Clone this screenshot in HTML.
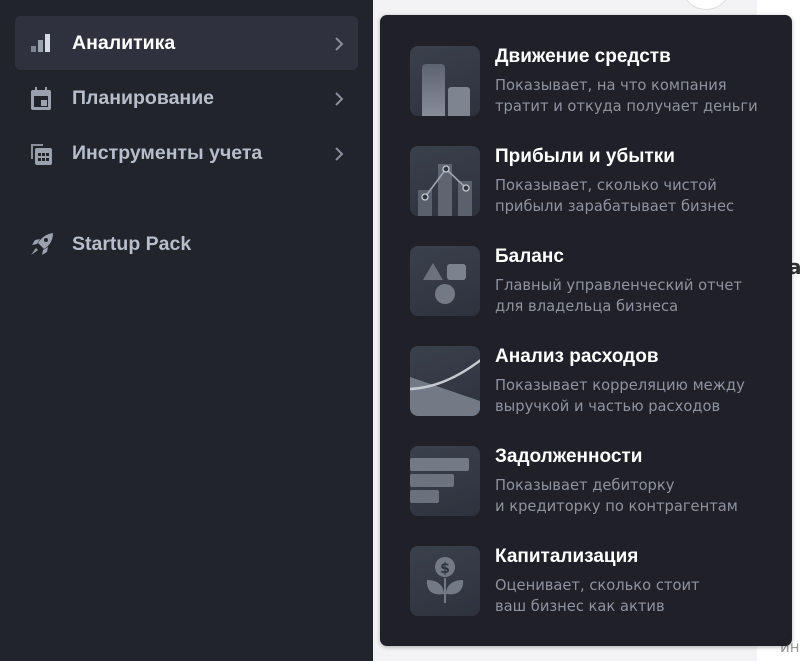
<!DOCTYPE html>
<html><head><meta charset="utf-8"><style>
*{margin:0;padding:0;box-sizing:border-box}
body{width:800px;height:661px;overflow:hidden;background:#f3f3f5;font-family:"DejaVu Sans","Liberation Sans",sans-serif;position:relative}
.side{position:absolute;left:0;top:0;width:373px;height:661px;background:#22242c}
.row{position:absolute;left:15px;width:343px;height:54px;border-radius:6px}
.row.act{background:#2f313e}
.row .t{position:absolute;left:57px;top:16px;font-family:"Liberation Sans",sans-serif;font-size:19.5px;font-weight:bold;color:#b7bdca}
.row.act .t{color:#fff}
.row svg.ic{position:absolute;left:14px;top:15px}
.chev{position:absolute;left:318px;top:20px}
.pop{position:absolute;left:380px;top:15px;width:412px;height:631px;background:#1f2028;border-radius:7px;box-shadow:0 1px 4px rgba(0,0,0,.3)}
.it{position:absolute;left:30px;width:380px;height:70px}
.box{position:absolute;left:0;top:0;width:70px;height:70px;border-radius:8px;background:linear-gradient(160deg,#3b404d,#2e323d);overflow:hidden}
.it h3{position:absolute;left:85px;top:0px;font-family:"Liberation Sans",sans-serif;font-size:19px;font-weight:bold;color:#fff;white-space:nowrap}
.it p{position:absolute;left:85px;top:29px;font-size:14.7px;line-height:21px;color:#8e939f;white-space:nowrap}
.rt{position:absolute;left:757px;top:0;width:43px;height:661px;background:#fff}
</style></head><body>
<div class="rt"></div>
<div style="position:absolute;left:683px;top:-30px;width:46px;height:40px;border-radius:50%;border:1px solid #ddd;background:#fff"></div>
<div style="position:absolute;left:788px;top:255px;font-size:20px;font-weight:bold;color:#333">а</div>
<div style="position:absolute;left:780px;top:638px;font-size:15px;color:#999">ин</div>
<div class="side">
 <div class="row act" style="top:16px">
  <svg class="ic" width="24" height="24" viewBox="0 0 24 24"><rect x="2" y="15" width="5" height="6" fill="#7f8593"/><rect x="9" y="9" width="5" height="12" fill="#9aa1ae"/><rect x="16" y="3" width="5" height="18" fill="#d5dbe5"/></svg>
  <div class="t">Аналитика</div>
  <svg class="chev" width="12" height="16" viewBox="0 0 12 16"><path d="M3 2l6 6-6 6" stroke="#8a8f9b" stroke-width="2" fill="none"/></svg>
 </div>
 <div class="row" style="top:71px">
  <svg class="ic" width="24" height="26" viewBox="0 0 24 26"><rect x="2" y="4" width="20" height="20" rx="2" fill="#9ba1ad"/><rect x="5" y="10" width="14" height="11" fill="#22242c"/><rect x="12" y="14" width="6" height="6" fill="#9ba1ad"/><rect x="6" y="1" width="2" height="4" fill="#9ba1ad"/><rect x="16" y="1" width="2" height="4" fill="#9ba1ad"/></svg>
  <div class="t">Планирование</div>
  <svg class="chev" width="12" height="16" viewBox="0 0 12 16"><path d="M3 2l6 6-6 6" stroke="#8a8f9b" stroke-width="2" fill="none"/></svg>
 </div>
 <div class="row" style="top:126px">
  <svg class="ic" width="24" height="26" viewBox="0 0 24 26"><path d="M2 3h12v2H4v13H2z" fill="#8a909c"/><rect x="6" y="7" width="17" height="17" rx="2" fill="#9ba1ad"/><g fill="#22242c"><rect x="9" y="12" width="3" height="3"/><rect x="13" y="12" width="3" height="3"/><rect x="17" y="12" width="3" height="3"/><rect x="9" y="17" width="3" height="3"/><rect x="13" y="17" width="3" height="3"/><rect x="17" y="17" width="3" height="3"/></g></svg>
  <div class="t">Инструменты учета</div>
  <svg class="chev" width="12" height="16" viewBox="0 0 12 16"><path d="M3 2l6 6-6 6" stroke="#8a8f9b" stroke-width="2" fill="none"/></svg>
 </div>
 <div class="row" style="top:217px">
  <svg class="ic" width="26" height="26" viewBox="0 0 26 26"><path d="M24 1C17 2 12 6 9 11l6 6c5-3 9-8 9-16z" fill="#9ba1ad"/><circle cx="17" cy="8" r="2" fill="#22242c"/><path d="M8 12l-5 1 3-5 5-1zM14 18l-1 5 5-3 1-5z" fill="#9ba1ad"/><path d="M7 16l-5 7 7-5z" fill="#9ba1ad"/></svg>
  <div class="t">Startup Pack</div>
 </div>
</div>
<div class="pop">
 <div class="it" style="top:31px"><div class="box"><svg width="70" height="70"><defs><linearGradient id="g" x1="0" y1="0" x2="0" y2="1"><stop offset="0" stop-color="#5d6471"/><stop offset="1" stop-color="#8a919d"/></linearGradient></defs><rect x="12" y="18" width="23" height="56" rx="4" fill="url(#g)"/><rect x="38" y="41" width="22" height="35" rx="3" fill="#7e8591"/></svg></div><h3>Движение средств</h3><p>Показывает, на что компания<br>тратит и откуда получает деньги</p></div>
 <div class="it" style="top:131px"><div class="box"><svg width="70" height="70"><rect x="8" y="44" width="14" height="30" fill="#5a616d"/><rect x="28" y="18" width="14" height="56" fill="#5e6571"/><rect x="48" y="35" width="14" height="40" fill="#5a616d"/><path d="M15 51L36 23L56 42" stroke="#a0a6b1" stroke-width="1.6" fill="none"/><g fill="#2f333d" stroke="#c5cad2" stroke-width="1.3"><circle cx="15" cy="51" r="3"/><circle cx="36" cy="23" r="3"/><circle cx="56" cy="42" r="3"/></g></svg></div><h3>Прибыли и убытки</h3><p>Показывает, сколько чистой<br>прибыли зарабатывает бизнес</p></div>
 <div class="it" style="top:231px"><div class="box"><svg width="70" height="70"><path d="M23 17l10 17H13z" fill="#6b727e"/><rect x="37" y="18" width="19" height="16" rx="3" fill="#7c838f"/><circle cx="35" cy="48" r="10" fill="#737a86"/></svg></div><h3>Баланс</h3><p>Главный управленческий отчет<br>для владельца бизнеса</p></div>
 <div class="it" style="top:331px"><div class="box"><svg width="70" height="70"><path d="M0 31L70 55V70H0z" fill="#737a86"/><path d="M0 43C25 42 50 30 72 13" stroke="#c5cad2" stroke-width="2.5" fill="none"/></svg></div><h3>Анализ расходов</h3><p>Показывает корреляцию между<br>выручкой и частью расходов</p></div>
 <div class="it" style="top:431px"><div class="box"><svg width="70" height="70"><rect x="0" y="12" width="59" height="13" rx="2" fill="#737a86"/><rect x="0" y="28" width="44" height="13" rx="2" fill="#6c737f"/><rect x="0" y="44" width="29" height="13" rx="2" fill="#6a717d"/></svg></div><h3>Задолженности</h3><p>Показывает дебиторку<br>и кредиторку по контрагентам</p></div>
 <div class="it" style="top:531px"><div class="box"><svg width="70" height="70"><circle cx="35" cy="21" r="10" fill="#737a86"/><text x="35" y="27" font-size="14" font-weight="bold" text-anchor="middle" fill="#2f333d" font-family="DejaVu Sans">$</text><path d="M35 32v25" stroke="#737a86" stroke-width="2"/><path d="M34 48C22 50 16 44 17 34c10 0 17 5 17 14zM36 48c12 2 18-4 17-14-10 0-17 5-17 14z" fill="#737a86"/></svg></div><h3>Капитализация</h3><p>Оценивает, сколько стоит<br>ваш бизнес как актив</p></div>
</div>
</body></html>
